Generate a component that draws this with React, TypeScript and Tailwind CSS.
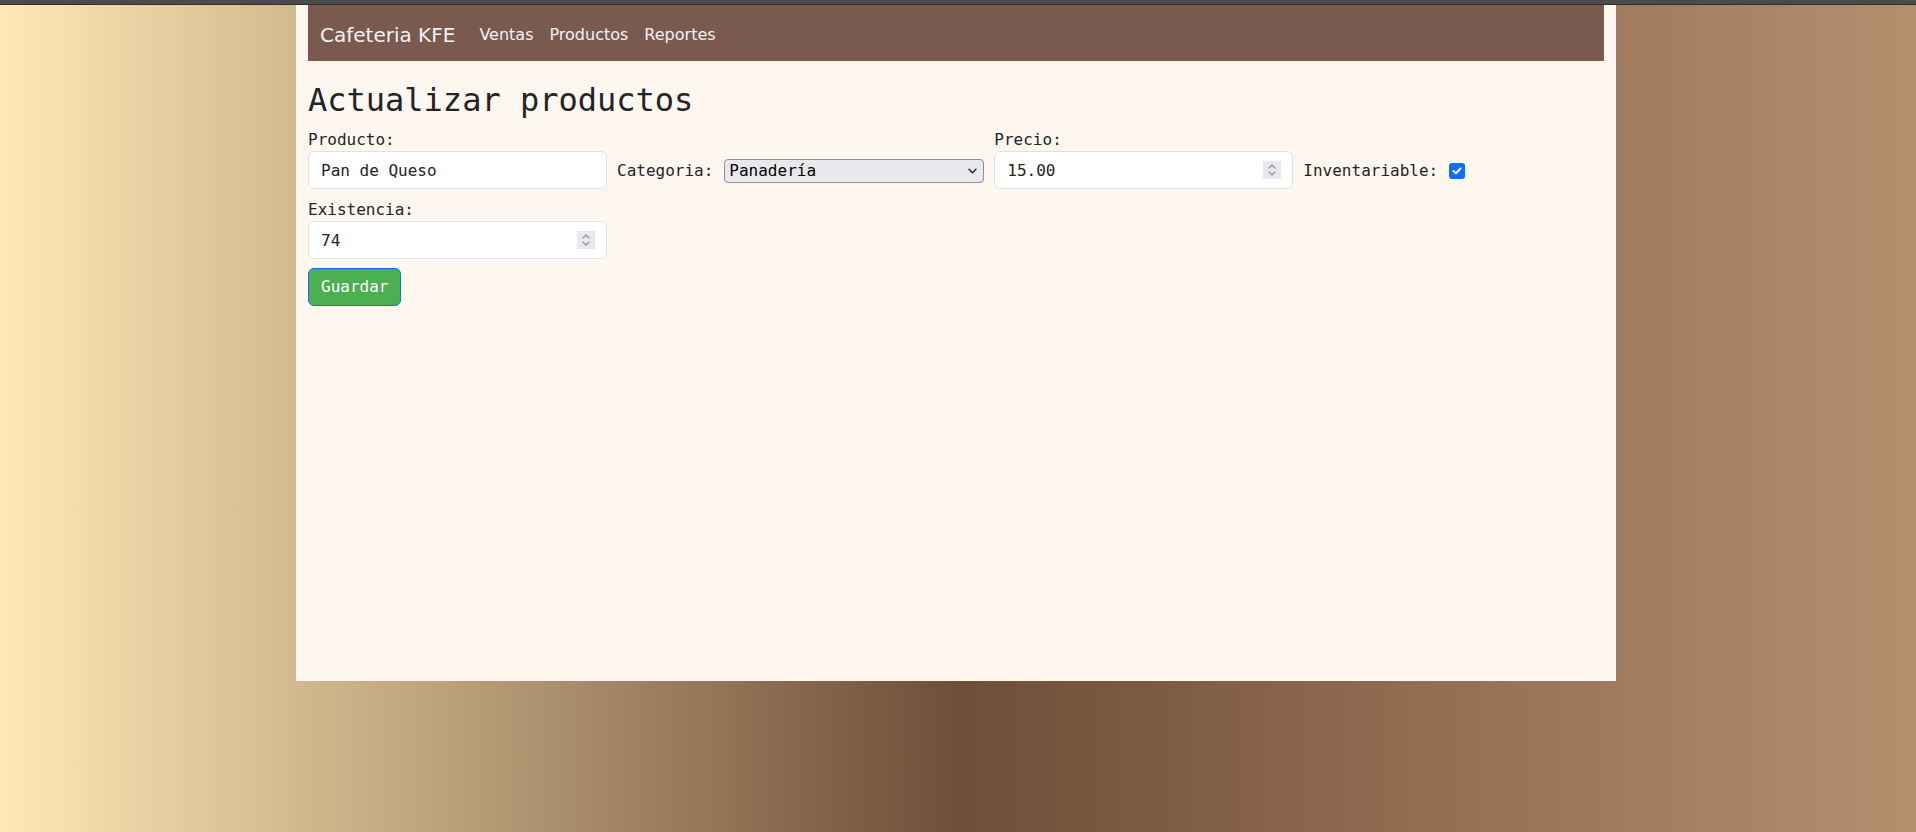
import React from "react";

function Spin() {
  return (
    <span className="pointer-events-none absolute right-[12px] top-1/2 flex h-[18px] w-[18px] -translate-y-1/2 flex-col items-center justify-center bg-[#e9e9ed]">
      <svg width="10" height="14" viewBox="0 0 10 14" fill="none" stroke="#8f8f9d" strokeWidth="1.2" strokeLinecap="round" strokeLinejoin="round">
        <path d="M2 5 L5 2 L8 5" />
        <path d="M2 9 L5 12 L8 9" />
      </svg>
    </span>
  );
}

function Field({ value, spin }: { value: string; spin?: boolean }) {
  return (
    <div className="relative w-[299px]">
      <input
        readOnly
        value={value}
        className="block h-[38px] w-full rounded-[6px] border border-[#dee2e6] bg-white px-[12px] text-[16px] text-[#212529] outline-none"
      />
      {spin && <Spin />}
    </div>
  );
}

function Label({ text }: { text: string }) {
  return <label className="block h-[24px] leading-[26px]">{text}</label>;
}

export default function App() {
  const mono = "font-['DejaVu_Sans_Mono','Liberation_Mono',monospace]";

  return (
    <div className="min-h-[832px] w-full bg-[linear-gradient(to_right,#ffe8b6_0%,#6f4e37_50%,#b68f6f_100%)]">
      <div className="h-[5px] w-full border-b border-[#2f2f2f] bg-[#4b4b4b]" />
      <div className="flex justify-center pr-[4px]">
        <div className={`h-[676px] w-[1320px] bg-[#fef7f0] px-[12px] text-[#212529] ${mono}`}>
          <nav className="flex h-[56px] items-center bg-[#7a5a4f] px-[12px] pt-[3px] font-['DejaVu_Sans','Liberation_Sans',sans-serif] text-[#f5f1ef]">
            <span className="mr-[16px] text-[20px]">Cafeteria KFE</span>
            <span className="px-[8px] text-[16px]">Ventas</span>
            <span className="px-[8px] text-[16px]">Productos</span>
            <span className="px-[8px] text-[16px]">Reportes</span>
          </nav>

          <h2 className="mb-[8px] mt-[20px] text-[32px] font-normal leading-[1.2]">
            Actualizar productos
          </h2>

          <form className="text-[16px] leading-[24px]">
            <div className="flex items-end gap-[10px]">
              <div>
                <Label text="Producto:" />
                <Field value="Pan de Queso" />
              </div>
              <div className="flex h-[38px] items-center gap-[11px] pt-[1px]">
                <label>Categoria:</label>
                <div className="relative">
                  <select
                    defaultValue="Panadería"
                    className="block h-[24px] w-[260px] appearance-none rounded-[4px] border border-[#8f8f9d] bg-[#e9e9ed] pl-[4px] text-[16px] leading-[20px] text-black outline-none"
                  >
                    <option>Panadería</option>
                    <option>Bebidas</option>
                    <option>Postres</option>
                  </select>
                  <svg className="pointer-events-none absolute right-[7px] top-1/2 -translate-y-1/2" width="9" height="6" viewBox="0 0 9 6" fill="none" stroke="#222" strokeWidth="1.4" strokeLinecap="round" strokeLinejoin="round">
                    <path d="M1 1.2 L4.5 4.7 L8 1.2" />
                  </svg>
                </div>
              </div>
              <div>
                <Label text="Precio:" />
                <Field value="15.00" spin />
              </div>
              <div className="flex h-[38px] items-center gap-[11px] pt-[1px]">
                <label>Inventariable:</label>
                <span className="flex h-[16px] w-[16px] items-center justify-center rounded-[3px] bg-[#0d6efd]">
                  <svg width="10" height="8" viewBox="0 0 10 8" fill="none" stroke="white" strokeWidth="2" strokeLinecap="round" strokeLinejoin="round">
                    <path d="M1.5 4 L4 6.3 L8.5 1.5" />
                  </svg>
                </span>
              </div>
            </div>

            <div className="mt-[8px]">
              <Label text="Existencia:" />
              <Field value="74" spin />
            </div>

            <button
              type="button"
              className="mt-[9px] rounded-[6px] border border-[#0d6efd] bg-[#4caf50] px-[12px] py-[6px] text-[16px] leading-[24px] text-white"
            >
              Guardar
            </button>
          </form>
        </div>
      </div>
    </div>
  );
}
